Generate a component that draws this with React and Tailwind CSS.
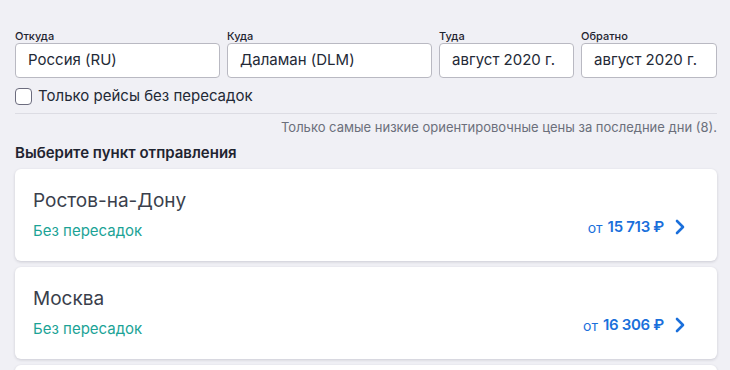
const FIELDS = [
  { label: 'Откуда', value: 'Россия (RU)', w: 'w-[205px]' },
  { label: 'Куда', value: 'Даламан (DLM)', w: 'w-[205px]' },
  { label: 'Туда', value: 'август 2020 г.', w: 'w-[135px]' },
  { label: 'Обратно', value: 'август 2020 г.', w: 'w-[136px]' },
]

const CITIES = [
  { name: 'Ростов-на-Дону', price: '15 713' },
  { name: 'Москва', price: '16 306' },
]

function Chevron() {
  return (
    <svg width="10" height="16" viewBox="0 0 10 16" className="ml-[11px]">
      <path d="M2 2l6 6-6 6" fill="none" stroke="#1a6fdb" strokeWidth="2.6" strokeLinecap="round" strokeLinejoin="round" />
    </svg>
  )
}

export default function App() {
  return (
    <div className="h-[370px] overflow-hidden bg-[#f0f0f5] pl-[15px] pr-[13px] pt-[30px] text-[#232936] font-['Inter',sans-serif]">
      {/* search fields */}
      <div className="flex gap-[7px]">
        {FIELDS.map(({ label, value, w }) => (
          <div key={label} className={w}>
            <div className="text-[11px] leading-[13px] font-medium text-[#1f2430]">{label}</div>
            <div className="h-[35px] flex items-center rounded-[4px] border border-[#b9b9c2] bg-white pl-[12px] text-[15px] text-[#232936]">
              {value}
            </div>
          </div>
        ))}
      </div>

      <label className="flex items-center mt-[10px] h-[17px]">
        <span className="w-[17px] h-[17px] rounded-[4px] border border-[#6c6c7e] bg-white" />
        <span className="ml-[6px] text-[15px] text-[#232936]">Только рейсы без пересадок</span>
      </label>

      <div className="mt-[8px] h-px bg-[#dcdce3]" />

      <div className="text-right text-[13px] leading-[27px] text-[#6b6f7b]">
        Только самые низкие ориентировочные цены за последние дни (8).
      </div>

      <div className="text-[15px] leading-[24px] font-semibold text-[#1f2430]">Выберите пункт отправления</div>

      {/* cities */}
      <div className="mt-[4px] flex flex-col gap-[6px]">
        {CITIES.map(({ name, price }) => (
          <div
            key={name}
            className="h-[92px] shrink-0 flex items-center justify-between rounded-[6px] bg-white px-[18px] shadow-[0_1px_3px_rgba(40,40,60,0.18)]"
          >
            <div className="flex flex-col gap-[8px]">
              <div className="text-[19px] leading-[24px] text-[#3a3f4c]">{name}</div>
              <div className="text-[15px] leading-[20px] text-[#1ba396]">Без пересадок</div>
            </div>
            <div className="flex items-center mt-[24px] mr-[14px] text-[#1a6fdb]">
              <span className="text-[14px] mr-[5px]">от</span>
              <span className="text-[15px] font-semibold tracking-[-0.3px]">{price} ₽</span>
              <Chevron />
            </div>
          </div>
        ))}
        <div className="h-[92px] shrink-0 rounded-[6px] bg-white shadow-[0_1px_3px_rgba(40,40,60,0.18)]" />
      </div>
    </div>
  )
}
